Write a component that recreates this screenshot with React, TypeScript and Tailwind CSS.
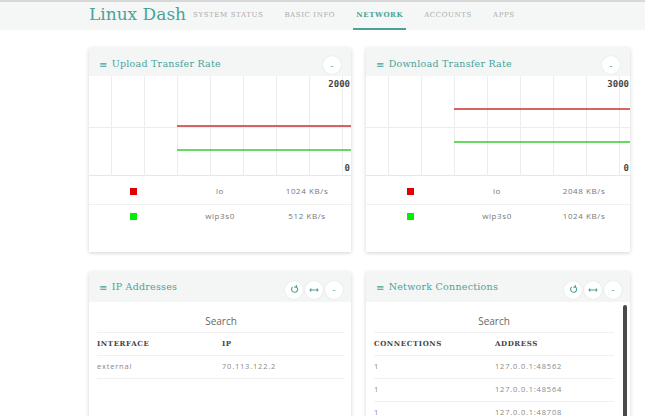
import React from 'react';

const serif = { fontFamily: '"DejaVu Serif", "Liberation Serif", serif' };

const navItems = ['System Status', 'Basic Info', 'Network', 'Accounts', 'Apps'];

const RoundBtn = ({ children }: { children: React.ReactNode }) => (
  <span className="w-[18px] h-[18px] rounded-full bg-white flex items-center justify-center text-[#4aa39a] text-[9px] leading-none shadow-[0_0_2px_rgba(0,0,0,0.1)]">
    {children}
  </span>
);

const Refresh = () => (
  <svg width="9" height="9" viewBox="0 0 24 24" fill="none" stroke="#4aa39a" strokeWidth="3" strokeLinecap="round">
    <path d="M6 6.5A8 8 0 1 0 17 5" />
    <path d="M17 1v4.5h-4.5" />
  </svg>
);

const Expand = () => (
  <svg width="10" height="6" viewBox="0 0 20 10" fill="none" stroke="#4aa39a" strokeWidth="2.2">
    <path d="M2 5h16M4.5 2L2 5l2.5 3M15.5 2L18 5l-2.5 3" />
  </svg>
);

const Title = ({ title }: { title: string }) => (
  <span className="text-[9.5px] text-[#4aa39a] tracking-[0.25px] flex items-center gap-[4px]" style={serif}>
    <span className="text-[10px]">≡</span>
    {title}
  </span>
);

const Chart = ({ max, red, green }: { max: string; red: number; green: number }) => {
  const xs = [22, 55, 88, 121, 154, 187, 220, 253];
  return (
    <div className="relative h-[100px] border-b border-[#e6e6e6]">
      <svg width="100%" height="100" className="absolute inset-0">
        {xs.map((x) => (
          <line key={x} x1={x + 0.5} y1="0" x2={x + 0.5} y2="100" stroke="#ececec" strokeWidth="1" />
        ))}
        <line x1="0" y1="51.5" x2="100%" y2="51.5" stroke="#ececec" strokeWidth="1" />
        <line x1="88" y1={red} x2="100%" y2={red} stroke="#c9302c" strokeWidth="1.6" />
        <line x1="88" y1={green} x2="100%" y2={green} stroke="#33cc33" strokeWidth="1.4" />
      </svg>
      <span className="absolute right-[1px] top-[2px] text-[9px] font-bold text-[#444]" style={{ fontFamily: '"DejaVu Sans Mono", monospace' }}>
        {max}
      </span>
      <span className="absolute right-[1px] bottom-[0px] text-[9px] font-bold text-[#444]" style={{ fontFamily: '"DejaVu Sans Mono", monospace' }}>
        0
      </span>
    </div>
  );
};

const Legend = ({ rows }: { rows: { color: string; name: string; rate: string }[] }) => (
  <div className="text-[8px] text-[#777] tracking-[0.6px]" style={{ fontFamily: '"Open Sans", sans-serif' }}>
    {rows.map((r, i) => (
      <div
        key={r.name}
        className={`grid grid-cols-[88px_86px_88px] items-center ${i === 0 ? 'h-[29px] pt-[2px] border-b border-[#f0f0f0]' : 'h-[22px]'}`}
      >
        <span className="flex justify-center">
          <span className="w-[7px] h-[7px]" style={{ background: r.color }} />
        </span>
        <span className="text-center">{r.name}</span>
        <span className="text-center">{r.rate}</span>
      </div>
    ))}
  </div>
);

const RateCard = ({ title, max, red, green, rows, w }: any) => (
  <div className={`${w} h-[204px] bg-white shadow-[0_1px_4px_rgba(0,0,0,0.18)]`}>
    <div className="h-[28px] bg-[#f3f6f5] flex items-center justify-between pl-[10px] pr-[10px] pt-[4px]">
      <Title title={title} />
      <div className="flex gap-[2px] pt-[2px]">
        <RoundBtn>-</RoundBtn>
      </div>
    </div>
    <Chart max={max} red={red} green={green} />
    <Legend rows={rows} />
  </div>
);

const TableCard = ({ title, w, cols, col2, rows, scroll }: any) => (
  <div className={`${w} h-[160px] bg-white shadow-[0_1px_4px_rgba(0,0,0,0.18)] flex flex-col`}>
    <div className="h-[30px] bg-[#f3f6f5] flex items-center justify-between pl-[10px] pr-[8px] pt-[1px]">
      <Title title={title} />
      <div className="flex gap-[2px] pt-[4px]">
        <RoundBtn>
          <Refresh />
        </RoundBtn>
        <RoundBtn>
          <Expand />
        </RoundBtn>
        <RoundBtn>-</RoundBtn>
      </div>
    </div>
    <div className="flex flex-1 min-h-0">
      <div className="flex-1 pl-[8px] pr-[6px] pt-[12px]">
        <div className="text-center text-[10px] text-[#666] h-[19px] border-b border-[#f0f0f0]" style={{ fontFamily: '"Open Sans", sans-serif' }}>
          Search
        </div>
        <div className="flex items-center h-[23px] border-b border-[#f0f0f0] text-[7px] font-bold text-[#444] tracking-[0.6px]" style={serif}>
          <span style={{ width: col2 }}>{cols[0]}</span>
          <span>{cols[1]}</span>
        </div>
        {rows.map((r: string[], i: number) => (
          <div key={i} className="flex items-center h-[23px] border-b border-[#f0f0f0] text-[7.5px] text-[#888] tracking-[0.8px]" style={{ fontFamily: '"Open Sans", sans-serif' }}>
            <span style={{ width: col2 }}>{r[0]}</span>
            <span>{r[1]}</span>
          </div>
        ))}
      </div>
      {scroll && (
        <div className="w-[10px] pt-[3px] flex justify-center">
          <div className="w-[4px] h-full bg-[#4a4a4a] rounded-[2px]" />
        </div>
      )}
    </div>
  </div>
);

export default function App() {
  return (
    <div className="w-[645px] h-[416px] overflow-hidden bg-white">
      <div className="h-[30px] bg-[#f5f7f6] border-t-2 border-[#d8d8d8] flex items-end pl-[89px]">
        <span className="text-[17px] text-[#4aa39a] leading-none pb-[7px] mr-[4px]" style={serif}>
          Linux Dash
        </span>
        <nav className="flex gap-[15px] h-full items-stretch">
          {navItems.map((n) => (
            <span
              key={n}
              className={`flex items-center uppercase text-[7px] tracking-[0.6px] px-[3px] pt-[1px] ${
                n === 'Network' ? 'text-[#4aa39a] border-b-2 border-[#4aa39a] font-bold' : 'text-[#aaa] border-b-2 border-transparent'
              }`}
              style={serif}
            >
              {n}
            </span>
          ))}
        </nav>
      </div>
      <div className="pl-[89px] pt-[18px] flex flex-col gap-[20px]">
        <div className="flex gap-[15px]">
          <RateCard
            w="w-[262px]"
            title="Upload Transfer Rate"
            max="2000"
            red={50}
            green={74}
            rows={[
              { color: '#e00000', name: 'lo', rate: '1024 KB/s' },
              { color: '#00ee00', name: 'wlp3s0', rate: '512 KB/s' },
            ]}
          />
          <RateCard
            w="w-[264px]"
            title="Download Transfer Rate"
            max="3000"
            red={33}
            green={66}
            rows={[
              { color: '#e00000', name: 'lo', rate: '2048 KB/s' },
              { color: '#00ee00', name: 'wlp3s0', rate: '1024 KB/s' },
            ]}
          />
        </div>
        <div className="flex gap-[15px]">
          <TableCard
            w="w-[262px]"
            title="IP Addresses"
            cols={['INTERFACE', 'IP']}
            col2={125}
            rows={[['external', '70.113.122.2']]}
          />
          <TableCard
            w="w-[264px]"
            title="Network Connections"
            cols={['CONNECTIONS', 'ADDRESS']}
            col2={121}
            scroll
            rows={[
              ['1', '127.0.0.1:48562'],
              ['1', '127.0.0.1:48564'],
              ['1', '127.0.0.1:48708'],
            ]}
          />
        </div>
      </div>
    </div>
  );
}
